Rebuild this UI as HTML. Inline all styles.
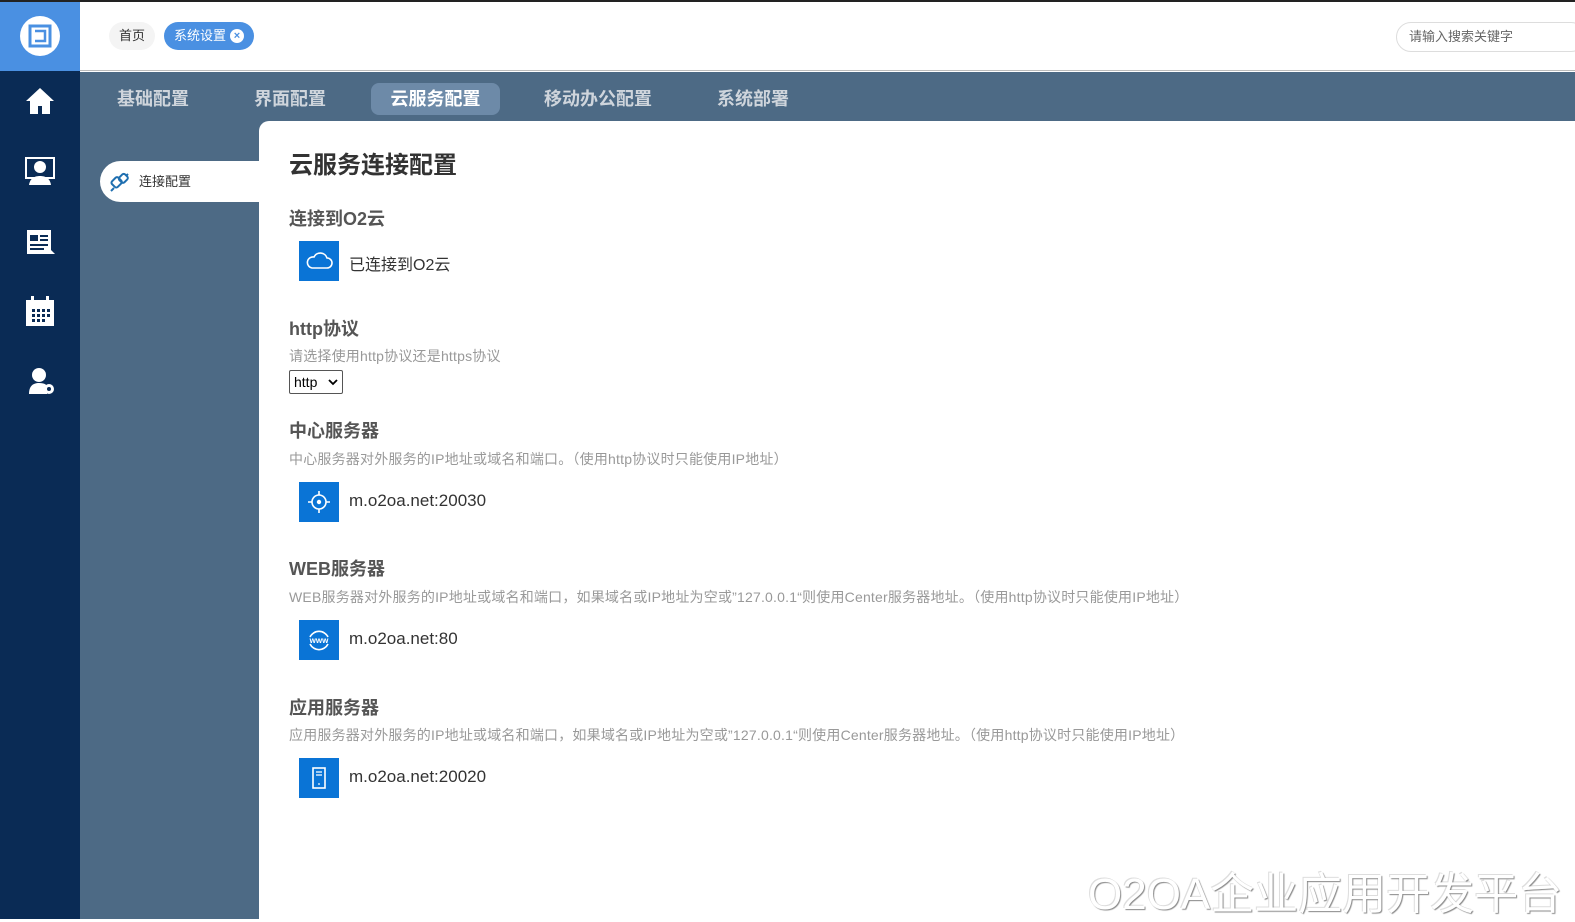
<!DOCTYPE html>
<html><head><meta charset="utf-8">
<style>
*{margin:0;padding:0;box-sizing:border-box}
body{width:1575px;height:919px;overflow:hidden;background:#fff;font-family:"Liberation Sans","Noto Sans CJK SC",sans-serif;position:relative}
.topline{position:absolute;left:0;top:0;width:1575px;height:2px;background:#222}
.side{position:absolute;left:0;top:0;width:80px;height:919px;background:#0a2b55}
.logo{position:absolute;left:0;top:0;width:80px;height:71px;background:#4a90e2}
.logo .c{position:absolute;left:20px;top:16px;width:40px;height:40px;border-radius:50%;background:#fff}
.topbar{position:absolute;left:80px;top:2px;width:1495px;height:69px;background:#fff;border-bottom:1px solid #bbb}
.tag{position:absolute;top:20px;height:28px;border-radius:14px;font-size:13px;line-height:28px;padding:0 10px;white-space:nowrap}
.search{position:absolute;top:20px;width:190px;height:30px;border:1px solid #ddd;border-radius:15px;font-size:13px;color:#666;line-height:28px;padding-left:12px}
.sec{position:absolute;left:80px;top:72px;width:1495px;height:847px;background:#4d6a85}
.tab{position:absolute;top:11px;height:32px;line-height:32px;font-size:18px;font-weight:bold;color:#cfd5dc;padding:0 20px;border-radius:8px;white-space:nowrap}
.menu{position:absolute;left:20px;top:89px;width:180px;height:41px;background:#fff;border-radius:21px 0 0 21px;font-size:13px;color:#333;line-height:41px;padding-left:39px}
.content{position:absolute;left:259px;top:121px;width:1316px;height:798px;background:#fff;border-radius:10px 0 0 0}
.h1{position:absolute;left:30px;top:24px;font-size:24px;font-weight:bold;color:#333}
.h2{position:absolute;left:30px;font-size:18px;font-weight:bold;color:#555}
.d{position:absolute;left:30px;font-size:14px;color:#999;white-space:nowrap;letter-spacing:0.2px}
.ic{position:absolute;left:40px;width:40px;height:40px;background:#0a74d6}
.ic svg{position:absolute;left:0;top:0}
.v{position:absolute;left:90px;font-size:17px;color:#333}
.wm{position:absolute;left:1088px;top:858px;font-size:44px;color:#fff;text-shadow:1px 1px 1px #888,-1px -1px 0 #ddd;white-space:nowrap}
</style></head><body>
<div class="side">
 <div class="logo"><div class="c">
  <svg width="40" height="40" viewBox="0 0 40 40"><rect x="10" y="10" width="20" height="20" fill="none" stroke="#4a90e2" stroke-width="3"/><path d="M15 15h10v10h-10" fill="none" stroke="#4a90e2" stroke-width="2.5"/></svg>
 </div></div>
 <svg style="position:absolute;left:24px;top:85px" width="32" height="32" viewBox="0 0 32 32"><path d="M16 3L2 16h4v13h8v-8h4v8h8V16h4z" fill="#fff"/></svg>
 <svg style="position:absolute;left:24px;top:155px" width="32" height="32" viewBox="0 0 32 32"><rect x="2" y="3" width="28" height="20" fill="none" stroke="#fff" stroke-width="2"/><circle cx="16" cy="12" r="6" fill="#fff"/><path d="M5 30c1-7 6-9 11-9s10 2 11 9z" fill="#fff"/></svg>
 <svg style="position:absolute;left:25px;top:227px" width="30" height="30" viewBox="0 0 30 30"><path d="M2 3h24v20l4 4H2z" fill="#fff"/><rect x="5" y="8" width="8" height="6" fill="#0a2b55"/><path d="M15 9h8M15 13h8M5 18h18M5 22h14" stroke="#0a2b55" stroke-width="2"/></svg>
 <svg style="position:absolute;left:25px;top:295px" width="30" height="32" viewBox="0 0 30 32"><rect x="1" y="5" width="28" height="26" fill="#fff"/><rect x="6" y="1" width="3" height="6" fill="#fff"/><rect x="21" y="1" width="3" height="6" fill="#fff"/><g fill="#0a2b55"><rect x="7" y="14" width="3" height="3"/><rect x="12" y="14" width="3" height="3"/><rect x="17" y="14" width="3" height="3"/><rect x="22" y="14" width="3" height="3"/><rect x="7" y="19" width="3" height="3"/><rect x="12" y="19" width="3" height="3"/><rect x="17" y="19" width="3" height="3"/><rect x="22" y="19" width="3" height="3"/><rect x="7" y="24" width="3" height="3"/><rect x="12" y="24" width="3" height="3"/><rect x="17" y="24" width="3" height="3"/></g></svg>
 <svg style="position:absolute;left:27px;top:366px" width="30" height="32" viewBox="0 0 30 32"><circle cx="12" cy="9" r="7" fill="#fff"/><path d="M2 28c0-8 4-11 10-11s8 2 8 4v7z" fill="#fff"/><circle cx="22" cy="23" r="5" fill="#fff"/><circle cx="22" cy="23" r="2" fill="#0a2b55"/></svg>
</div>
<div class="topline"></div>
<div class="topbar">
 <div class="tag" style="left:29px;background:#f4f4f4;color:#333">首页</div>
 <div class="tag" style="left:84px;background:#4a90e2;color:#fff;padding-right:28px">系统设置<span style="position:absolute;right:10px;top:7px;width:14px;height:14px;border-radius:50%;background:#fff;color:#4a90e2;font-size:11px;line-height:14px;text-align:center;font-weight:bold">×</span></div>
 <div class="search" style="left:1316px">请输入搜索关键字</div>
</div>
<div class="sec">
 <div class="tab" style="left:17px">基础配置</div>
 <div class="tab" style="left:154px">界面配置</div>
 <div class="tab" style="left:291px;width:129px;padding:0;text-align:center;background:#6d8aa8;color:#fff">云服务配置</div>
 <div class="tab" style="left:444px">移动办公配置</div>
 <div class="tab" style="left:617px">系统部署</div>
 <div class="menu"><svg style="position:absolute;left:9px;top:10px" width="22" height="22" viewBox="0 0 22 22"><g fill="none" stroke="#1f6fb0" stroke-width="2"><rect x="3" y="7" width="9" height="8" rx="2" transform="rotate(-45 8 11)"/><rect x="10" y="4" width="8" height="7" rx="2" transform="rotate(-45 14 7)"/><path d="M2 20l3-3M19 3l-2 2"/></g></svg>连接配置</div>
</div>
<div class="content">
 <div class="h1">云服务连接配置</div>
 <div class="h2" style="top:84px">连接到O2云</div>
 <div class="ic" style="top:120px"><svg width="40" height="40" viewBox="0 0 40 40"><path d="M13 27h15a5 5 0 0 0 0-10 7 7 0 0 0-13-1 5.5 5.5 0 0 0-2 11z" fill="none" stroke="#fff" stroke-width="1.6"/></svg></div>
 <div class="v" style="top:130px;font-size:16px">已连接到O2云</div>
 <div class="h2" style="top:194px">http协议</div>
 <div class="d" style="top:225px">请选择使用http协议还是https协议</div>
 <div style="position:absolute;left:30px;top:249px;width:54px;height:24px;border:1px solid #555;border-radius:2px;font-size:14px;line-height:22px;padding-left:4px;color:#000">http<svg style="position:absolute;right:4px;top:8px" width="10" height="7" viewBox="0 0 10 7"><path d="M1 1l4 4 4-4" fill="none" stroke="#000" stroke-width="1.8"/></svg></div>
 <div class="h2" style="top:296px">中心服务器</div>
 <div class="d" style="top:328px">中心服务器对外服务的IP地址或域名和端口。（使用http协议时只能使用IP地址）</div>
 <div class="ic" style="top:361px"><svg width="40" height="40" viewBox="0 0 40 40"><g fill="none" stroke="#fff" stroke-width="1.6"><circle cx="20" cy="20" r="7"/><path d="M20 9v4M20 27v4M9 20h4M27 20h4"/></g><circle cx="20" cy="20" r="2.2" fill="#fff"/></svg></div>
 <div class="v" style="top:370px">m.o2oa.net:20030</div>
 <div class="h2" style="top:434px">WEB服务器</div>
 <div class="d" style="top:466px">WEB服务器对外服务的IP地址或域名和端口，如果域名或IP地址为空或”127.0.0.1“则使用Center服务器地址。（使用http协议时只能使用IP地址）</div>
 <div class="ic" style="top:499px"><svg width="40" height="40" viewBox="0 0 40 40"><path d="M11 17a10 10 0 0 1 18 0M11 24a10 10 0 0 0 18 0" fill="none" stroke="#fff" stroke-width="1.6"/><text x="20" y="23" font-size="8" font-weight="bold" fill="#fff" text-anchor="middle" font-family="Liberation Sans">www</text></svg></div>
 <div class="v" style="top:508px">m.o2oa.net:80</div>
 <div class="h2" style="top:573px">应用服务器</div>
 <div class="d" style="top:604px">应用服务器对外服务的IP地址或域名和端口，如果域名或IP地址为空或”127.0.0.1“则使用Center服务器地址。（使用http协议时只能使用IP地址）</div>
 <div class="ic" style="top:637px"><svg width="40" height="40" viewBox="0 0 40 40"><rect x="14" y="10" width="12" height="20" fill="none" stroke="#fff" stroke-width="1.6"/><path d="M17 14h6M17 17h6" stroke="#fff" stroke-width="1.2"/><circle cx="20" cy="26" r="0.9" fill="#fff"/></svg></div>
 <div class="v" style="top:646px">m.o2oa.net:20020</div>
</div>
<div class="wm">O2OA企业应用开发平台</div>
</body></html>
